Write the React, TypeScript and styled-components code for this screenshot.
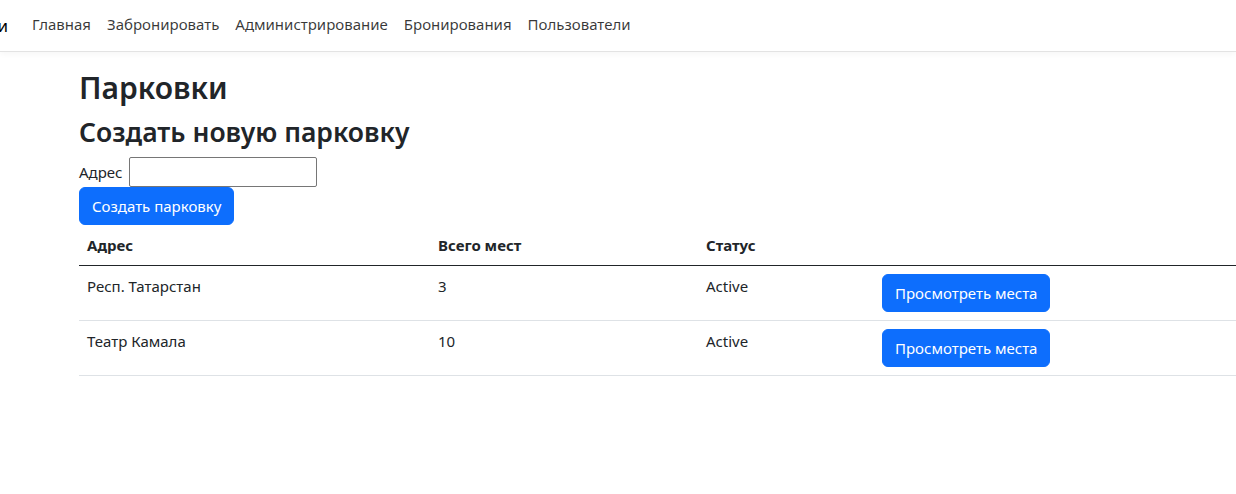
import styled, { createGlobalStyle } from 'styled-components';

interface Parking {
  address: string;
  total: number;
  status: string;
}

const parkings: Parking[] = [
  { address: 'Респ. Татарстан', total: 3, status: 'Active' },
  { address: 'Театр Камала', total: 10, status: 'Active' },
];

const navLinks = [
  'Главная',
  'Забронировать',
  'Администрирование',
  'Бронирования',
  'Пользователи',
];

const App = () => {
  return (
    <>
      <GlobalStyle />
      <Navbar>
        <Brand>
          <BrandText>Парковки</BrandText>
        </Brand>
        <NavList>
          {navLinks.map((link) => (
            <NavLink key={link}>{link}</NavLink>
          ))}
        </NavList>
      </Navbar>
      <Main>
        <PageTitle>Парковки</PageTitle>
        <SectionTitle>Создать новую парковку</SectionTitle>
        <Field>
          <label htmlFor="address">Адрес</label>
          <Input id="address" type="text" />
        </Field>
        <Button>Создать парковку</Button>
        <Table>
          <thead>
            <tr>
              <Th $width={351}>Адрес</Th>
              <Th $width={268}>Всего мест</Th>
              <Th $width={176}>Статус</Th>
              <Th $width={420}></Th>
            </tr>
          </thead>
          <tbody>
            {parkings.map((parking) => (
              <tr key={parking.address}>
                <Td>{parking.address}</Td>
                <Td>{parking.total}</Td>
                <Td>{parking.status}</Td>
                <Td>
                  <Button>Просмотреть места</Button>
                </Td>
              </tr>
            ))}
          </tbody>
        </Table>
      </Main>
    </>
  );
};

const GlobalStyle = createGlobalStyle`
  html, body {
    margin: 0;
    background: #fff;
    overflow: hidden;
  }
  body {
    font-family: "Noto Sans", "Open Sans", sans-serif;
    font-size: 15px;
    line-height: 24px;
    color: #212529;
  }
  * {
    box-sizing: border-box;
  }
`;

const Navbar = styled.nav`
  display: flex;
  align-items: center;
  height: 52px;
  padding-bottom: 3px;
  border-bottom: 1px solid #e3e3e3;
  box-shadow: 0 2px 6px rgba(0, 0, 0, 0.04);
`;

const Brand = styled.div`
  width: 8px;
  overflow: hidden;
  display: flex;
  justify-content: flex-end;
  margin-right: 16px;
  padding-top: 4px;
`;

const BrandText = styled.span`
  font-size: 17px;
  white-space: nowrap;
  color: #000;
`;

const NavList = styled.ul`
  display: flex;
  list-style: none;
  margin: 0;
  padding: 0;
`;

const NavLink = styled.li`
  padding: 8px;
  color: rgba(0, 0, 0, 0.78);
  cursor: pointer;
`;

const Main = styled.main`
  padding: 17px 0 0 79px;
  width: 1300px;
`;

const PageTitle = styled.h2`
  margin: 0 0 8px;
  font-size: 30px;
  font-weight: 600;
  line-height: 38px;
`;

const SectionTitle = styled.h3`
  margin: 0 0 8px;
  font-size: 26.5px;
  font-weight: 600;
  line-height: 34px;
`;

const Field = styled.div`
  display: flex;
  align-items: center;
  gap: 7px;
  height: 30px;
`;

const Input = styled.input`
  width: 188px;
  height: 30px;
  border: 1px solid #767676;
  border-radius: 2px;
  padding: 1px 2px;
  font: inherit;
`;

const Button = styled.button`
  display: inline-block;
  padding: 6px 12px;
  font-family: inherit;
  font-size: 15px;
  line-height: 24px;
  color: #fff;
  background-color: #0d6efd;
  border: 1px solid #0d6efd;
  border-radius: 6px;
  cursor: pointer;
`;

const Table = styled.table`
  width: 1215px;
  border-collapse: collapse;
  vertical-align: top;
`;

const Th = styled.th<{ $width: number }>`
  width: ${(p) => p.$width}px;
  padding: 8px;
  text-align: left;
  font-weight: 700;
  border-bottom: 1px solid #212529;
`;

const Td = styled.td`
  padding: 8px;
  vertical-align: top;
  border-bottom: 1px solid #dee2e6;
`;

export default App;
